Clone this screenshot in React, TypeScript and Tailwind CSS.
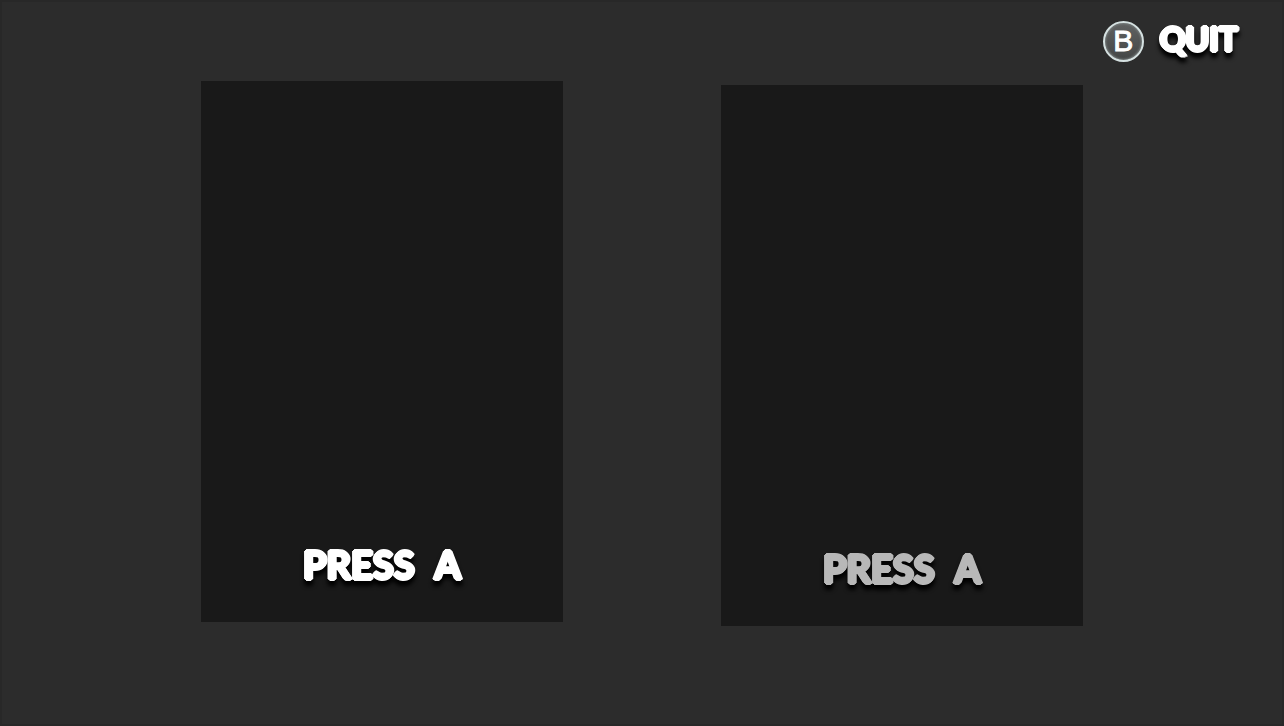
import React from "react";

// Round the heavy outline with a ring of hard shadows, then cast one soft shadow below.
const lettering =
  "font-['Lato','Liberation_Sans',sans-serif] font-bold leading-10 [text-shadow:2px_0_currentColor,-2px_0_currentColor,0_2px_currentColor,0_-2px_currentColor,1px_1px_currentColor,-1px_1px_currentColor,1px_-1px_currentColor,-1px_-1px_currentColor] [-webkit-text-stroke:2px_currentColor] [filter:drop-shadow(0_5px_2px_#000)]";

function PlayerSlot({ label, className }: { label: string; className: string }) {
  return (
    <section
      aria-label={label}
      className="flex aspect-[362/541] max-w-[362px] flex-1 flex-col items-center justify-end bg-[#191919] pb-[38px]"
    >
      <button type="button" className={`flex gap-5 text-[38px] ${lettering} ${className}`}>
        <span>PRESS </span>
        <span>A</span>
      </button>
    </section>
  );
}

export default function App() {
  return (
    <div className="flex min-h-screen flex-col border-2 border-[#282828] bg-[#2c2c2c]">
      <header className="flex h-[79px] shrink-0 justify-end pr-11">
        <button type="button" className="flex items-center gap-4 pb-px text-white">
          <span className="flex size-[41px] items-center justify-center rounded-full border-2 border-[#d5e1e1] bg-linear-to-b from-[#606262] to-[#444646] font-['Liberation_Sans',sans-serif] text-3xl leading-none shadow-[inset_0_0_2px_1px_#777d7d] [-webkit-text-stroke:1px_currentColor]">
            B
          </span>
          <span className={`pb-1 text-[32px] ${lettering}`}>QUIT</span>
        </button>
      </header>
      <main className="flex items-start justify-center gap-[158px] px-8">
        <PlayerSlot label="Player 1" className="text-white" />
        <div className="flex max-w-[362px] flex-1 pt-1">
          <PlayerSlot label="Player 2" className="text-[#b8b8b8]" />
        </div>
      </main>
    </div>
  );
}
